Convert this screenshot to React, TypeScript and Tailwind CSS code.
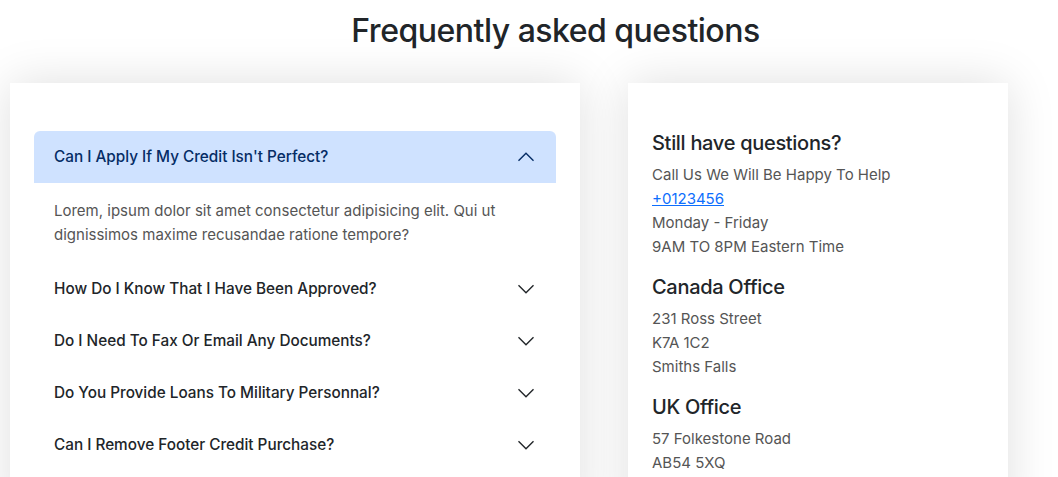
import React from "react";

const Chevron = ({ up, color }: { up?: boolean; color: string }) => (
  <svg width="20" height="20" viewBox="0 0 16 16" fill="none" className="shrink-0">
    {up ? (
      <path d="M2 11 L8 5 L14 11" stroke={color} strokeWidth="1.1" />
    ) : (
      <path d="M2 5 L8 11 L14 5" stroke={color} strokeWidth="1.1" />
    )}
  </svg>
);

const questions = [
  "How Do I Know That I Have Been Approved?",
  "Do I Need To Fax Or Email Any Documents?",
  "Do You Provide Loans To Military Personnal?",
  "Can I Remove Footer Credit Purchase?",
];

export default function App() {
  return (
    <div
      className="w-[1058px] h-[477px] overflow-hidden bg-white text-[#212529]"
      style={{ fontFamily: "Inter, 'Noto Sans', sans-serif" }}
    >
      <h2 className="pl-[53px] pt-[12px] text-center text-[32px] leading-[38px] font-medium tracking-[-0.5px]">
        Frequently asked questions
      </h2>
      <div className="mt-[33px] flex gap-[48px] pl-[10px] items-start">
        <div className="w-[570px] bg-white shadow-[0_0_45px_rgba(0,0,0,0.13)] px-[24px] pt-[48px] pb-[48px]">
          <div className="rounded-t-[6px] bg-[#cfe2ff] h-[52px] px-[20px] flex items-center justify-between text-[#052c65] text-[15.3px] font-medium">
            <span>Can I Apply If My Credit Isn't Perfect?</span>
            <Chevron up color="#052c65" />
          </div>
          <div className="px-[20px] py-[16px] text-[15px] leading-[24px] text-[#555]">
            Lorem, ipsum dolor sit amet consectetur adipisicing elit. Qui ut dignissimos maxime recusandae ratione tempore?
          </div>
          {questions.map((q) => (
            <div
              key={q}
              className="h-[52px] px-[20px] flex items-center justify-between text-[15.3px] font-medium text-[#212529]"
            >
              <span>{q}</span>
              <Chevron color="#212529" />
            </div>
          ))}
        </div>
        <div className="w-[380px] bg-white shadow-[0_0_45px_rgba(0,0,0,0.13)] px-[24px] pt-[48px] pb-[48px]">
          <h5 className="text-[20px] leading-[24px] font-medium tracking-[-0.3px] mb-[8px]">Still have questions?</h5>
          <div className="text-[15px] leading-[24px] text-[#555] mb-[16px]">
            <p>Call Us We Will Be Happy To Help</p>
            <p>
              <a href="#" className="text-[#0d6efd] underline">+0123456</a>
            </p>
            <p>Monday - Friday</p>
            <p>9AM TO 8PM Eastern Time</p>
          </div>
          <h5 className="text-[20px] leading-[24px] font-medium tracking-[-0.3px] mb-[8px]">Canada Office</h5>
          <div className="text-[15px] leading-[24px] text-[#555] mb-[16px]">
            <p>231 Ross Street</p>
            <p>K7A 1C2</p>
            <p>Smiths Falls</p>
          </div>
          <h5 className="text-[20px] leading-[24px] font-medium tracking-[-0.3px] mb-[8px]">UK Office</h5>
          <div className="text-[15px] leading-[24px] text-[#555]">
            <p>57 Folkestone Road</p>
            <p>AB54 5XQ</p>
          </div>
        </div>
      </div>
    </div>
  );
}
